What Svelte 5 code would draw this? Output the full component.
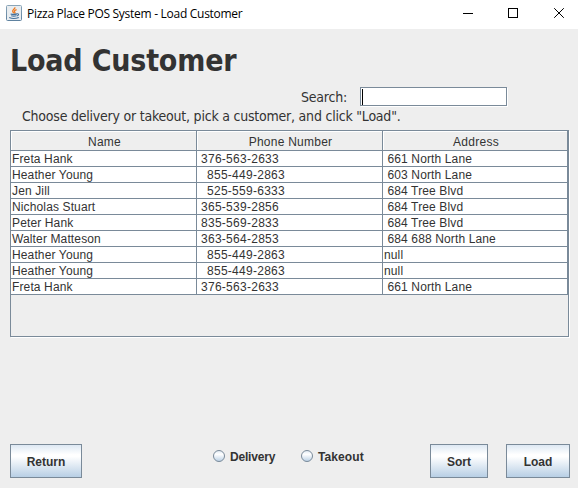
<script>
  const rows = [
    ['Freta Hank', ' 376-563-2633', ' 661 North Lane'],
    ['Heather Young', '   855-449-2863', ' 603 North Lane'],
    ['Jen Jill', '   525-559-6333', ' 684 Tree Blvd'],
    ['Nicholas Stuart', ' 365-539-2856', ' 684 Tree Blvd'],
    ['Peter Hank', ' 835-569-2833', ' 684 Tree Blvd'],
    ['Walter Matteson', ' 363-564-2853', ' 684 688 North Lane'],
    ['Heather Young', '   855-449-2863', 'null'],
    ['Heather Young', '   855-449-2863', 'null'],
    ['Freta Hank', ' 376-563-2633', ' 661 North Lane']
  ];
  const columns = ['Name', 'Phone Number', 'Address'];
  const options = ['Delivery', 'Takeout'];
</script>

<div class="window">
  <header class="titlebar">
    <svg class="java" width="16" height="16" viewBox="0 0 16 16">
      <defs>
        <linearGradient id="tile" x1="0" y1="0" x2="0" y2="1">
          <stop offset="0" stop-color="#8aa5b8" />
          <stop offset="1" stop-color="#5f82a0" />
        </linearGradient>
      </defs>
      <rect x=".5" y=".5" width="15" height="15" rx="1" fill="#e9edf0" stroke="url(#tile)" />
      <path d="M8.8 2.2C9.6 4 6.2 4.6 6.7 6.4c.2.7.8 1.1 1 1.8M10.6 4.6C8.2 5.4 8 6.2 8.8 7.1c.5.6.1 1-.3 1.3" fill="none" stroke="#ee7a20" stroke-width="1.3" />
      <path d="M4.6 8.9c1.8.6 4.4.6 6.4 0M5.2 10.7c1.6.5 3.6.5 5.2 0M11 8.8c2.2-.5 2 1.8-.2 2.2M3.2 12.6c2.6 1 6.8 1 9.6-.2" fill="none" stroke="#44719b" stroke-width="1.1" />
    </svg>
    <span class="caption">Pizza Place POS System - Load Customer</span>
    <svg class="controls" width="103" height="12" viewBox="0 0 103 12" shape-rendering="crispEdges">
      <path d="M0 6.5h10" stroke="#000" />
      <rect x="45.5" y="1.5" width="9" height="9" fill="none" stroke="#000" />
      <path d="M91.2 1.2l9.6 9.6M100.8 1.2l-9.6 9.6" stroke="#000" shape-rendering="auto" />
    </svg>
  </header>

  <main>
    <h1>Load Customer</h1>
    <div class="search">
      <label for="query">Search:</label>
      <div class="field"><i class="caret"></i><input id="query" type="text" /></div>
    </div>
    <p>Choose delivery or takeout, pick a customer, and click "Load".</p>

    <div class="pane">
      <div class="grid">
        <div class="row head">
          {#each columns as name}<div class="cell"><span>{name}</span></div>{/each}
        </div>
        {#each rows as row}
          <div class="row">
            {#each row as value}<div class="cell">{value}</div>{/each}
          </div>
        {/each}
      </div>
    </div>

    <footer>
      <button class="return">Return</button>
      <div class="options">
        {#each options as option}
          <span class="option">
            <svg width="13" height="13" viewBox="0 0 13 13">
              <defs>
                <linearGradient id="dot-{option}" x1="0" y1="0" x2="0" y2="1">
                  <stop offset="0" stop-color="#dde8f3" />
                  <stop offset=".35" stop-color="#fff" />
                  <stop offset="1" stop-color="#b8cfe5" />
                </linearGradient>
              </defs>
              <circle cx="6" cy="6" r="5.5" fill="url(#dot-{option})" stroke="#7a8a99" />
            </svg>
            <b>{option}</b>
          </span>
        {/each}
      </div>
      <button class="sort">Sort</button>
      <button class="load">Load</button>
    </footer>
  </main>
</div>

<style>
  .window {
    width: 578px;
    height: 488px;
    overflow: hidden;
    background: #eee;
    color: #333;
    font-family: "Liberation Sans", Arial, sans-serif;
    font-size: 12px;
  }
  .titlebar {
    display: flex;
    box-sizing: border-box;
    height: 29px;
    padding-left: 6px;
    background: #fff;
    color: #000;
  }
  .java { flex: none; margin-top: 5px; }
  .caption {
    margin-left: 5px;
    font: 12px/28px "Open Sans", "Noto Sans", sans-serif;
    letter-spacing: -0.28px;
    white-space: nowrap;
  }
  .controls { flex: none; margin: 7px 12px 0 auto; }
  main {
    display: flex;
    flex-direction: column;
    height: 459px;
    padding: 0 9px 0 10px;
    box-sizing: border-box;
  }
  h1 {
    height: 58px;
    margin: 0;
    font: bold 30px/64px "DejaVu Sans Condensed", "DejaVu Sans", sans-serif;
    font-stretch: condensed;
    letter-spacing: -0.2px;
    white-space: nowrap;
  }
  .search { display: flex; height: 20px; padding-left: 291px; }
  label, p {
    font: 14px/20px "DejaVu Sans Condensed", "DejaVu Sans", sans-serif;
    font-stretch: condensed;
    letter-spacing: -0.22px;
    white-space: nowrap;
  }
  label { width: 59px; }
  .field {
    display: flex;
    box-sizing: border-box;
    width: 147px;
    height: 19px;
    padding: 1px 0 0 1px;
    border: 1px solid #7a8a99;
    background: #fff;
    box-shadow: 1px 1px #fff;
  }
  .caret { width: 1px; height: 16px; background: #000; }
  input { width: 130px; border: 0; padding: 0; outline: 0; background: none; }
  p { height: 23px; margin: 0 0 0 12px; line-height: 19px; }
  .pane {
    box-sizing: border-box;
    height: 207px;
    border: 1px solid #7a8a99;
    box-shadow: 1px 1px #fff;
  }
  .grid { width: 557px; }
  .row {
    display: grid;
    grid-template-columns: 186px 186px 185px;
    height: 16px;
    background: #fff;
    line-height: 17px;
  }
  .cell {
    box-sizing: border-box;
    padding-left: 1px;
    border-right: 1px solid #7a8a99;
    border-bottom: 1px solid #7a8a99;
    white-space: pre;
    overflow: hidden;
    letter-spacing: 0.13px;
  }
  .cell:nth-child(2) { letter-spacing: 0.27px; word-spacing: -0.6px; }
  .head { height: 20px; background: #eee; line-height: 22px; text-align: center; }
  .head .cell, .head .cell:nth-child(2) {
    padding: 0 0 0 2px;
    box-shadow: inset 1px 1px #fff;
    letter-spacing: 0.25px;
    word-spacing: 0;
  }
  footer { display: flex; margin: 107px -1px 0 0; }
  button {
    box-sizing: border-box;
    height: 34px;
    padding: 2px 0 0;
    border: 1px solid #7a8a99;
    border-radius: 0;
    background: linear-gradient(#dde8f3 0, #fff 30%, #fff 36%, #b8cfe5 100%);
    color: #333;
    font: bold 12px "Liberation Sans", Arial, sans-serif;
  }
  .return { width: 72px; }
  .sort { width: 58px; margin-left: auto; }
  .load { width: 64px; margin-left: 18px; }
  .options { display: flex; margin-left: 131px; }
  .option { display: flex; width: 88px; height: 24px; }
  .option svg { margin-top: 6px; }
  .option b { margin-left: 4px; line-height: 26px; letter-spacing: -0.2px; }
  .option:last-child b { letter-spacing: 0.1px; }
</style>
